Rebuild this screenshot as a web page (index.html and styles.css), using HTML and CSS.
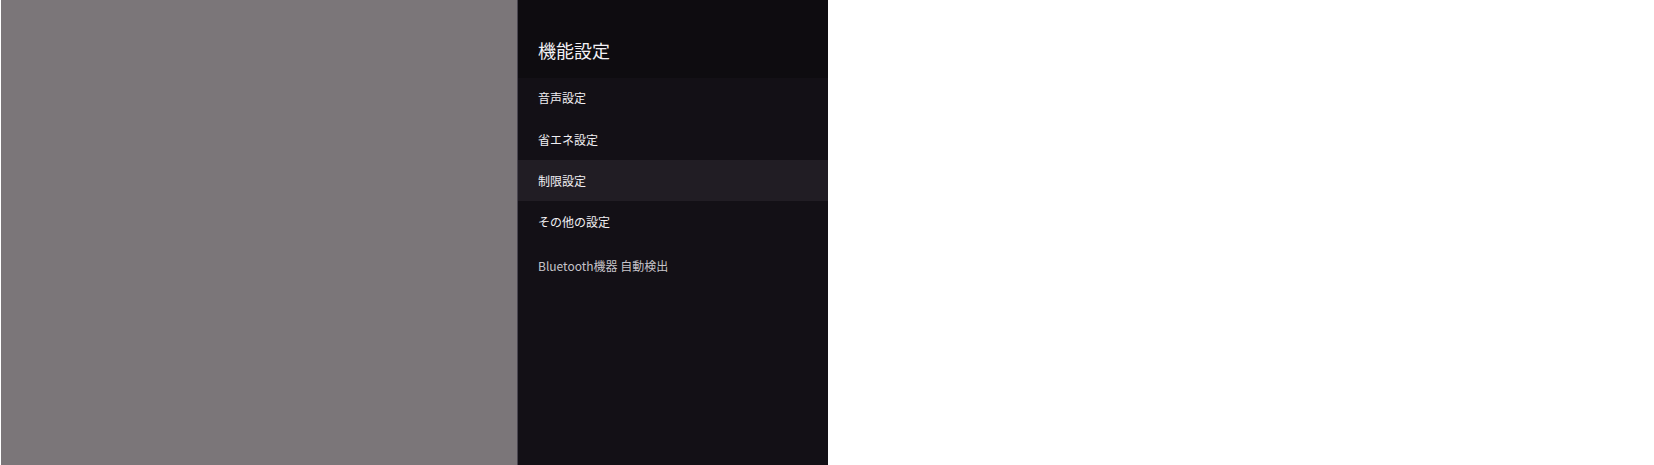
FILE: index.html
```html
<!DOCTYPE html>
<html lang="ja">
<head>
    <meta charset="UTF-8">
    <meta name="viewport" content="width=device-width, initial-scale=1.0">
    <title>機能設定</title>
    <link rel="stylesheet" href="styles.css">
</head>
<body>
    <div class="screen">
        <!-- Dimmed background behind the menu -->
        <div class="backdrop"></div>

        <!-- Settings menu panel -->
        <div class="menu-panel">
            <div class="menu-header">
                <h2>機能設定</h2>
            </div>
            <ul class="menu-list">
                <li class="menu-item">音声設定</li>
                <li class="menu-item">省エネ設定</li>
                <li class="menu-item selected">制限設定</li>
                <li class="menu-item">その他の設定</li>
                <li class="menu-item toggle">Bluetooth機器 自動検出</li>
            </ul>
        </div>
    </div>
</body>
</html>
```

FILE: styles.css
```css
* {
    box-sizing: border-box;
}

body, html {
    margin: 0;
    padding: 0;
    height: 100%;
    width: 100%;
    background-color: #ffffff;
    font-family: "Noto Sans CJK JP", "Noto Sans", sans-serif;
}

.screen {
    display: flex;
    height: 100%;
    padding-left: 1px;
}

.backdrop {
    width: 517px;
    background-color: #7b7679;
    border-right: 1px solid #4a4650;
}

.menu-panel {
    width: 310px;
    background-color: #131016;
    display: flex;
    flex-direction: column;
}

.menu-header {
    height: 78px;
    padding: 38px 20px 0;
    background-color: #0e0c10;
}

.menu-header h2 {
    margin: 0;
    font-size: 18px;
    font-weight: normal;
    line-height: 24px;
    color: #f2f0f4;
}

.menu-list {
    list-style: none;
    margin: 0;
    padding: 0;
}

.menu-item {
    height: 41px;
    padding: 0 20px;
    display: flex;
    align-items: center;
    font-size: 12px;
    color: #f0eef2;
}

.menu-item:first-child {
    padding-bottom: 2px;
}

.menu-item.selected {
    background-color: #211d24;
}

.menu-item.toggle {
    height: 46px;
    color: #c6c3c9;
}
```
